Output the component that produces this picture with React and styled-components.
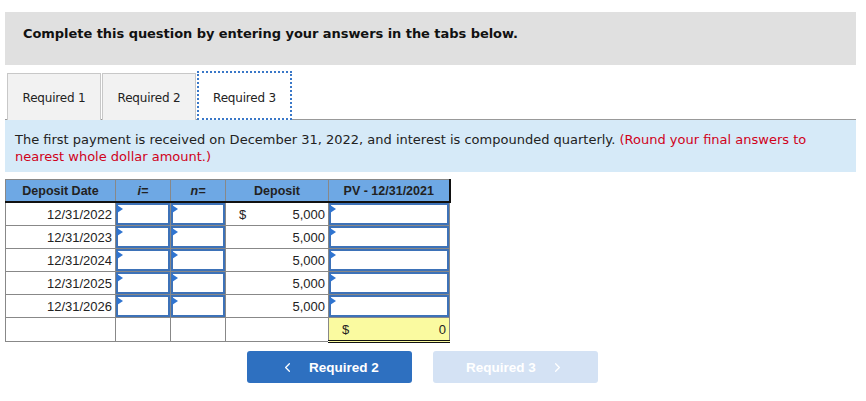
import React from 'react'
import styled, { createGlobalStyle } from 'styled-components'
import { ChevronLeft, ChevronRight } from 'lucide-react'

const GlobalStyle = createGlobalStyle`
  body {
    margin: 0;
    background: #fff;
    font-family: "DejaVu Sans", Verdana, sans-serif;
  }
`

const Page = styled.div`
  width: 851px;
  padding: 12px 10px 0 5px;
`

const Banner = styled.div`
  height: 53px;
  box-sizing: border-box;
  background: #e0e0e0;
  padding: 14px 0 0 18px;
  font-size: 13px;
  line-height: 15px;
  font-weight: bold;
  color: #111;
  letter-spacing: -0.05px;
`

const Tabs = styled.div`
  margin-top: 8px;
  display: flex;
  gap: 1px;
  padding-left: 2px;
  border-bottom: 1px solid #999;
`

const Tab = styled.div`
  width: 94px;
  height: 47px;
  display: flex;
  align-items: center;
  justify-content: center;
  padding-top: 1px;
  font-size: 12px;
  color: #222;
  letter-spacing: -0.2px;
  background: #f2f2f2;
  border: 1px solid #c8c8c8;
  border-bottom: none;
  box-sizing: border-box;
  margin-bottom: -1px;
  ${p => p.$active && `
    background: #fff;
    border: 2px dotted #3a78c8;
    margin-top: -2px;
    padding-top: 4px;
    height: 49px;
    width: 95px;
  `}
`

const Info = styled.div`
  background: #d6eaf8;
  height: 52px;
  box-sizing: border-box;
  padding: 11px 10px 0 10px;
  font-size: 13px;
  line-height: 17px;
  color: #222;
`

const Red = styled.span`
  color: #d0021b;
`

const Grid = styled.table`
  margin-top: 7px;
  border-collapse: collapse;
  table-layout: fixed;
  width: 444px;
  font-family: "Liberation Sans", Arial, sans-serif;
  font-size: 13px;
  color: #222;
  border: 1px solid #777;
`

const Head = styled.th`
  background: #6ea8e4;
  height: 21px;
  padding: 0;
  font-weight: bold;
  font-size: 12.5px;
  color: #222;
  border: 1px solid #888;
  border-bottom: 2px solid #111;
  ${p => p.$italic && 'font-style: italic;'}
  ${p => p.$last && 'border-right: 2px solid #111;'}
`

const Cell = styled.td`
  height: 22px;
  padding: 0 3px 0 0;
  border: 1px solid #888;
  text-align: right;
  vertical-align: middle;
  background: ${p => p.$total ? '#fafaa0' : '#fff'};
  ${p => p.$total && 'border-bottom: 3px double #111;'}
`

const InputCell = styled.td`
  height: 22px;
  padding: 0;
  border: 1px solid #888;
`

const InputBox = styled.div`
  position: relative;
  height: 22px;
  box-sizing: border-box;
  border: 2px solid #3d72b8;
  background: #fff;
  &::before {
    content: '';
    position: absolute;
    left: -1px;
    top: -1px;
    border-top: 4px solid transparent;
    border-bottom: 4px solid transparent;
    border-left: 6px solid #2f74d0;
    transform: translateY(1px);
  }
`

const Money = styled.div`
  display: flex;
  justify-content: space-between;
  padding-left: 13px;
`

const Buttons = styled.div`
  margin-top: 8px;
  padding-left: 242px;
  display: flex;
  gap: 21px;
`

const NavButton = styled.button`
  width: 165px;
  height: 32px;
  border: none;
  border-radius: 3px;
  display: flex;
  align-items: center;
  justify-content: center;
  gap: 14px;
  font-family: "Liberation Sans", Arial, sans-serif;
  font-weight: bold;
  font-size: 13.5px;
  color: #fff;
  background: ${p => p.$disabled ? '#d4e2f4' : '#2e70c0'};
`

const rows = ['12/31/2022', '12/31/2023', '12/31/2024', '12/31/2025', '12/31/2026']

const App = () => {
  return (
    <Page>
      <GlobalStyle />
      <Banner>Complete this question by entering your answers in the tabs below.</Banner>
      <Tabs>
        <Tab>Required 1</Tab>
        <Tab>Required 2</Tab>
        <Tab $active>Required 3</Tab>
      </Tabs>
      <Info>
        The first payment is received on December 31, 2022, and interest is compounded quarterly.{' '}
        <Red>(Round your final answers to nearest whole dollar amount.)</Red>
      </Info>
      <Grid>
        <colgroup>
          <col style={{ width: 110 }} />
          <col style={{ width: 55 }} />
          <col style={{ width: 55 }} />
          <col style={{ width: 103 }} />
          <col style={{ width: 121 }} />
        </colgroup>
        <thead>
          <tr>
            <Head>Deposit Date</Head>
            <Head $italic>i=</Head>
            <Head $italic>n=</Head>
            <Head>Deposit</Head>
            <Head $last>PV - 12/31/2021</Head>
          </tr>
        </thead>
        <tbody>
          {rows.map((d, i) => (
            <tr key={d}>
              <Cell>{d}</Cell>
              <InputCell><InputBox /></InputCell>
              <InputCell><InputBox /></InputCell>
              <Cell>
                {i === 0 ? <Money><span>$</span><span>5,000</span></Money> : '5,000'}
              </Cell>
              <InputCell><InputBox /></InputCell>
            </tr>
          ))}
          <tr>
            <Cell />
            <Cell />
            <Cell />
            <Cell />
            <Cell $total>
              <Money><span>$</span><span>0</span></Money>
            </Cell>
          </tr>
        </tbody>
      </Grid>
      <Buttons>
        <NavButton>
          <ChevronLeft size={15} strokeWidth={2} />
          Required 2
        </NavButton>
        <NavButton $disabled>
          Required 3
          <ChevronRight size={15} strokeWidth={2} />
        </NavButton>
      </Buttons>
    </Page>
  )
}

export default App
